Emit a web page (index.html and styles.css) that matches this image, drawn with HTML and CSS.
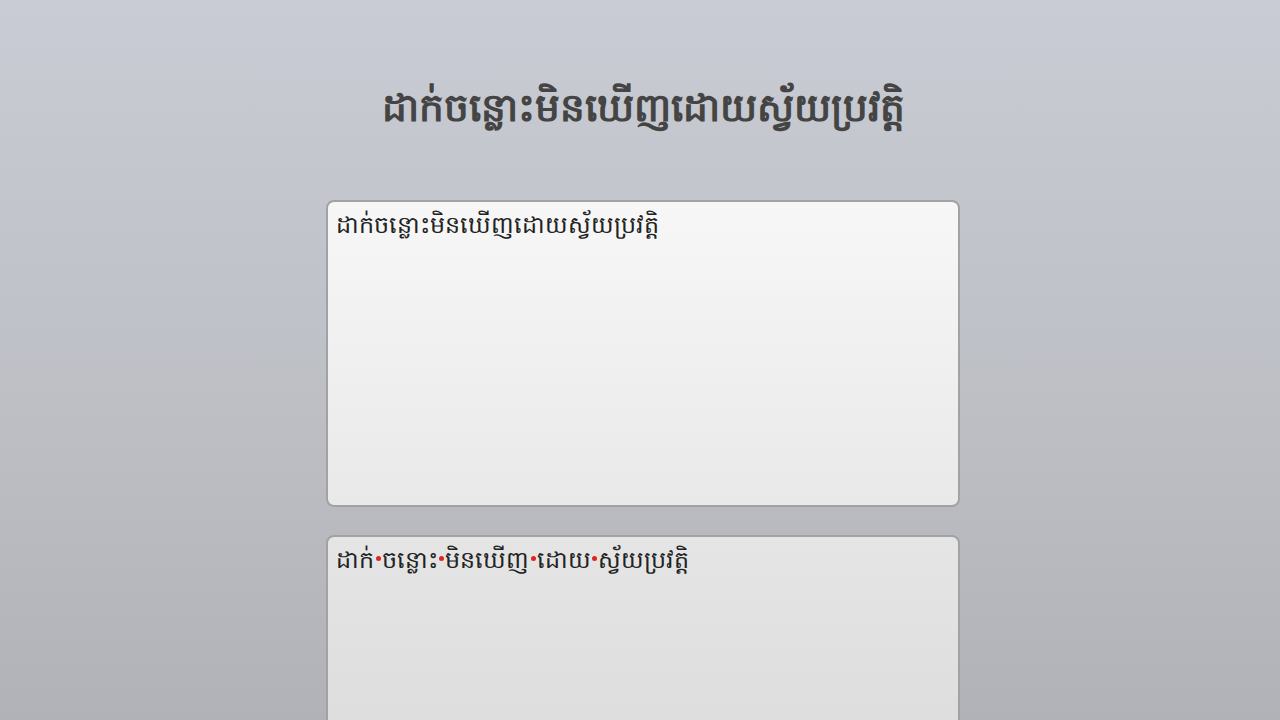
FILE: index.html
```html
<!DOCTYPE html>
<html lang="km">
<head>
<meta charset="utf-8">
<title>ដាក់ចន្លោះមិនឃើញដោយស្វ័យប្រវត្តិ</title>
<link rel="stylesheet" href="styles.css">
</head>
<body>
<main class="page">
  <h1 class="title">ដាក់ចន្លោះមិនឃើញដោយស្វ័យប្រវត្តិ</h1>
  <div class="box box-input">ដាក់ចន្លោះមិនឃើញដោយស្វ័យប្រវត្តិ</div>
  <div class="box box-output">ដាក់<span class="zw"></span>ចន្លោះ<span class="zw"></span>មិនឃើញ<span class="zw"></span>ដោយ<span class="zw"></span>ស្វ័យប្រវត្តិ</div>
</main>
</body>
</html>
```

FILE: styles.css
```css
html, body {
  margin: 0;
  padding: 0;
}
body {
  min-height: 100vh;
  background: linear-gradient(to bottom, #c9ccd4 0%, #bcbec4 50%, #aaacb0 100%);
  font-family: "Noto Sans", "DejaVu Sans", sans-serif;
  color: #222;
}
.page {
  display: flex;
  flex-direction: column;
  align-items: center;
  padding-top: 66px;
  padding-left: 6px;
}
.title {
  margin: 0 0 54px;
  font-size: 39px;
  font-weight: bold;
  color: #444;
  line-height: 80px;
}
.box {
  box-sizing: border-box;
  width: 634px;
  height: 307px;
  border: 2px solid #a2a2a4;
  border-radius: 8px;
  padding: 0 8px;
  font-size: 23.75px;
  line-height: 44px;
  color: #222;
  margin-bottom: 28px;
}
.box-input {
  background: linear-gradient(to bottom, #f7f7f7, #e9e9e9);
}
.box-output {
  background: linear-gradient(to bottom, #e5e5e5, #d9d9d9);
}
.zw {
  display: inline-block;
  width: 5px;
  height: 5px;
  border-radius: 50%;
  background: #e52222;
  margin: 0 1px 0 1.5px;
  vertical-align: 0.3em;
}
```
